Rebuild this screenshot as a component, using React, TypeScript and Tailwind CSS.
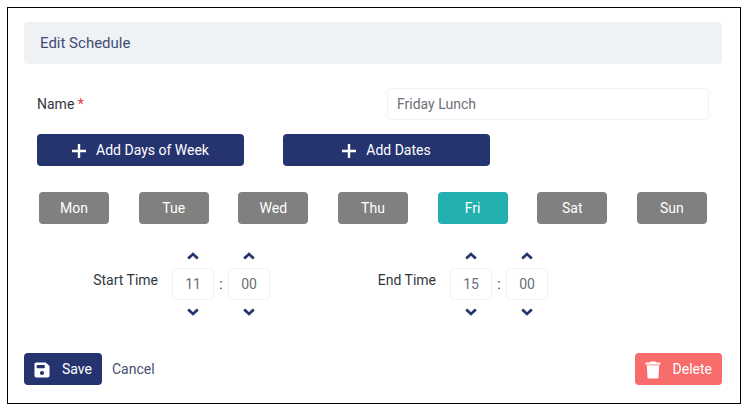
import { useState } from "react";

const DAYS = ["Mon", "Tue", "Wed", "Thu", "Fri", "Sat", "Sun"];

const pad = (n: number) => String(n).padStart(2, "0");

const PlusIcon = () => (
  <svg viewBox="0 0 14 14" className="mt-0.5 size-3.5" aria-hidden="true">
    <path d="M7 0v14M0 7h14" stroke="currentColor" strokeWidth="2.4" />
  </svg>
);

const SaveIcon = () => (
  <svg viewBox="0 0 16 16" className="mt-0.5 size-4" aria-hidden="true">
    <path
      fill="currentColor"
      fillRule="evenodd"
      d="M2 .5h9.8L15.5 4v9.7a1.8 1.8 0 0 1-1.8 1.8H2.3A1.8 1.8 0 0 1 .5 13.7V2A1.5 1.5 0 0 1 2 .5zM3.2 3a.5.5 0 0 0-.5.5v2.3c0 .3.2.5.5.5h7.1c.3 0 .5-.2.5-.5V3.5a.5.5 0 0 0-.5-.5zM8 8.9a2.1 2.1 0 1 0 0 4.2 2.1 2.1 0 0 0 0-4.2z"
    />
  </svg>
);

const TrashIcon = () => (
  <svg viewBox="0 0 16 18" className="mt-0.5 h-[18px] w-4" aria-hidden="true">
    <path
      fill="currentColor"
      d="M.5 1.6h4.2L5.6.5h4.8l.9 1.1h4.2v1.9H.5zM1.8 4.3h12.4l-.7 11.9c-.1.8-.6 1.3-1.4 1.3H3.9c-.8 0-1.3-.5-1.4-1.3z"
    />
  </svg>
);

const Chevron = ({ down }: { down?: boolean }) => (
  <svg viewBox="0 0 12 8" className="h-2 w-3" aria-hidden="true">
    <path
      d={down ? "M1.2 1.4L6 5.9l4.8-4.5" : "M1.2 6.6L6 2.1l4.8 4.5"}
      fill="none"
      stroke="currentColor"
      strokeWidth="2.8"
    />
  </svg>
);

interface SpinnerProps {
  id: string;
  label: string;
  value: number;
  max: number;
  onChange: (value: number) => void;
}

const Spinner = ({ id, label, value, max, onChange }: SpinnerProps) => {
  const step = (by: number) => onChange((value + by + max) % max);

  return (
    <div className="flex flex-col items-center">
      <button
        type="button"
        aria-label={`Increase ${label}`}
        onClick={() => step(1)}
        className="flex h-6 w-full items-center justify-center text-[#25346f]"
      >
        <Chevron />
      </button>
      <input
        id={id}
        aria-label={label}
        value={pad(value)}
        onChange={(e) => onChange((Number(e.target.value) || 0) % max)}
        className="h-8 w-[42px] rounded-sm border border-[#f1f2f4] text-center text-sm text-[#6b6f78] outline-none"
      />
      <button
        type="button"
        aria-label={`Decrease ${label}`}
        onClick={() => step(-1)}
        className="flex h-6 w-full items-center justify-center text-[#25346f]"
      >
        <Chevron down />
      </button>
    </div>
  );
};

interface TimeFieldProps {
  id: string;
  label: string;
  initialHour: number;
}

const TimeField = ({ id, label, initialHour }: TimeFieldProps) => {
  const [hour, setHour] = useState(initialHour);
  const [minute, setMinute] = useState(0);

  return (
    <div className="flex items-center">
      <label htmlFor={`${id}-hour`} className="mr-3.5 pb-2 text-sm text-[#33373d]">
        {label}
      </label>
      <Spinner id={`${id}-hour`} label={`${label} hour`} value={hour} max={24} onChange={setHour} />
      <span className="w-3.5 text-center text-sm text-[#33373d]">:</span>
      <Spinner id={`${id}-minute`} label={`${label} minute`} value={minute} max={60} onChange={setMinute} />
    </div>
  );
};

const App = () => {
  const [name, setName] = useState("Friday Lunch");
  const [selected, setSelected] = useState(["Fri"]);

  const toggleDay = (day: string) => {
    setSelected((days) => (days.includes(day) ? days.filter((d) => d !== day) : [...days, day]));
  };

  return (
    <div className="bg-white p-[7px] font-[Roboto,sans-serif] text-sm">
      <form
        onSubmit={(e) => e.preventDefault()}
        className="border border-black pt-3.5 pr-[18px] pb-[18px] pl-4"
      >
        <h1 className="rounded-sm bg-[#eff2f5] px-4 py-[11px] text-[15px] leading-5 text-[#414d74]">
          Edit Schedule
        </h1>

        <div className="px-[13px] pt-6">
          <div className="grid grid-cols-2 items-center gap-7">
            <label htmlFor="name" className="text-[#33373d]">
              Name <span className="text-[#e8353b]">*</span>
            </label>
            <input
              id="name"
              type="text"
              required
              value={name}
              onChange={(e) => setName(e.target.value)}
              className="h-8 w-full rounded-sm border border-[#f1f2f4] px-[9px] text-[#6b6f78] outline-none"
            />
          </div>

          <div className="mt-3.5 flex gap-[39px]">
            <button
              type="button"
              className="flex h-8 w-[207px] items-center justify-center gap-2.5 rounded-sm bg-[#25346f] text-white"
            >
              <PlusIcon />
              Add Days of Week
            </button>
            <button
              type="button"
              className="flex h-8 w-[207px] items-center justify-center gap-2.5 rounded-sm bg-[#25346f] text-white"
            >
              <PlusIcon />
              Add Dates
            </button>
          </div>

          <div className="mt-[26px] flex justify-between px-0.5">
            {DAYS.map((day) => (
              <button
                key={day}
                type="button"
                aria-pressed={selected.includes(day)}
                onClick={() => toggleDay(day)}
                className={`h-8 w-[70px] rounded-sm text-white ${
                  selected.includes(day) ? "bg-[#23b0b1]" : "bg-[#808080]"
                }`}
              >
                {day}
              </button>
            ))}
          </div>

          <div className="mt-5 flex">
            <div className="flex w-[233px] justify-end">
              <TimeField id="start" label="Start Time" initialHour={11} />
            </div>
            <div className="flex w-[278px] justify-end">
              <TimeField id="end" label="End Time" initialHour={15} />
            </div>
          </div>
        </div>

        <div className="mt-[29px] flex items-center">
          <button
            type="submit"
            className="flex h-8 items-center gap-3 rounded-sm bg-[#25346f] px-2.5 text-white"
          >
            <SaveIcon />
            Save
          </button>
          <a href="#cancel" className="ml-2.5 text-[#46506f]">
            Cancel
          </a>
          <button
            type="button"
            className="ml-auto flex h-8 items-center gap-3 rounded-sm bg-[#f86c6b] px-2.5 text-white"
          >
            <TrashIcon />
            Delete
          </button>
        </div>
      </form>
    </div>
  );
};

export default App;
